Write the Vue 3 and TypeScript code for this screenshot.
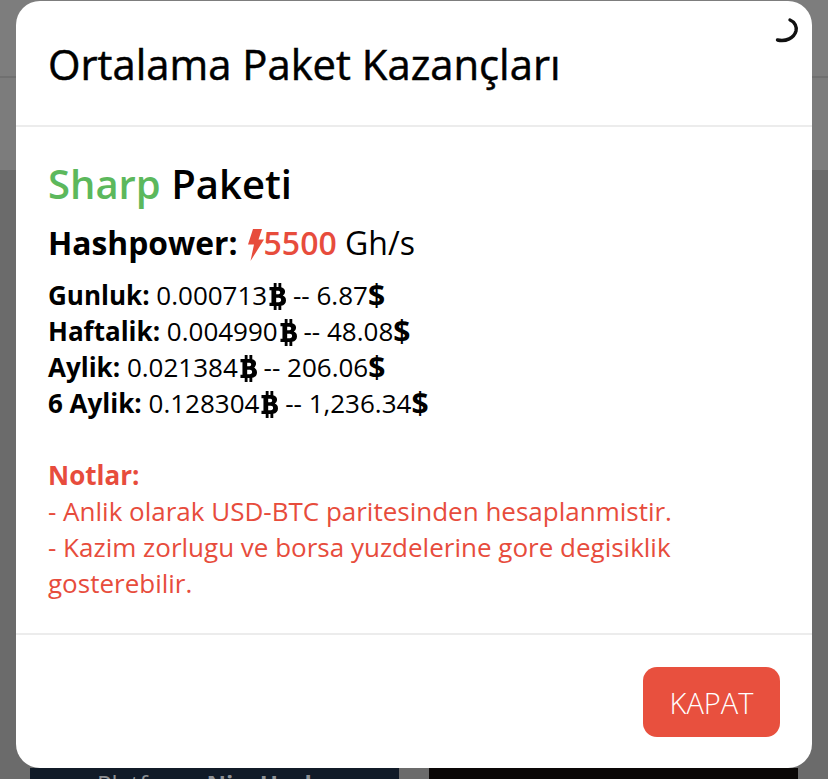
<script setup lang="ts">
const rows = [
  { label: "Gunluk:", btc: "0.000713", usd: "6.87" },
  { label: "Haftalik:", btc: "0.004990", usd: "48.08" },
  { label: "Aylik:", btc: "0.021384", usd: "206.06" },
  { label: "6 Aylik:", btc: "0.128304", usd: "1,236.34" }
];
</script>

<template>
  <div class="page">
    <div class="bg-nav"></div>
    <div class="bg-sub"></div>
    <div class="bg-content">
      <div class="bg-card card-blue"><span class="bg-text">Platform: <b>NiceHash</b></span></div>
      <div class="bg-card card-dark"></div>
    </div>

    <div class="modal">
      <header class="modal-header">
        <h1>Ortalama Paket Kazançları</h1>
        <svg class="spinner" width="28" height="30" viewBox="0 0 28 30">
          <path d="M18 4C23 6 25 11 24 15C22 22 14 26 5.5 24" fill="none" stroke="#111" stroke-width="3.4" stroke-linecap="round" />
        </svg>
      </header>

      <section class="modal-body">
        <h2><span class="green">Sharp</span> Paketi</h2>
        <h3>
          <b>Hashpower:</b>
          <span class="red power"><svg class="bolt" width="17" height="32" viewBox="0 0 17 32">
              <path d="M6 0H15L11.5 10.5H17L3.5 32L7 15.5H1Z" fill="currentColor" />
            </svg>5500</span>
          Gh/s
        </h3>

        <ul class="rates">
          <li v-for="row in rows" :key="row.label">
            <b>{{ row.label }}</b> {{ row.btc }}<svg class="btc" width="17" height="27" viewBox="0 0 18 27" preserveAspectRatio="none">
              <path fill-rule="evenodd" d="M0.5 4H5V0H8V4H10V0H13V4.2C15.8 4.8 17 6.6 17 8.6C17 10.5 16 11.9 14.6 12.6C16.6 13.2 18 15 18 17.4C18 20.2 16 22.3 13 22.8V27H10V23H8V27H5V23H0.5V19.8H2.6V7.2H0.5ZM7.6 7.8V11.2H10C11.1 11.2 11.8 10.5 11.8 9.5C11.8 8.5 11.1 7.8 10 7.8ZM7.6 14.8V19.2H10.4C11.9 19.2 12.8 18.3 12.8 17C12.8 15.7 11.9 14.8 10.4 14.8Z" fill="currentColor" />
            </svg> -- {{ row.usd }}<b class="usd">$</b>
          </li>
        </ul>

        <div class="notes">
          <b>Notlar:</b>
          <p>- Anlik olarak USD-BTC paritesinden hesaplanmistir.</p>
          <p>- Kazim zorlugu ve borsa yuzdelerine gore degisiklik gosterebilir.</p>
        </div>
      </section>

      <footer class="modal-footer">
        <button type="button" class="close-btn">KAPAT</button>
      </footer>
    </div>
  </div>
</template>

<style>
html,
body {
  margin: 0;
  background: #6b6b6b;
}
</style>

<style scoped>
.page {
  position: relative;
  width: 828px;
  height: 779px;
  overflow: hidden;
  background: #6b6b6b;
  font-family: "Open Sans", "Noto Sans", sans-serif;
}

.bg-nav {
  height: 78px;
  box-sizing: border-box;
  background: #7d7d7d;
  border-bottom: 2px solid #707070;
}

.bg-sub {
  height: 92px;
  background: #7c7c7c;
}

.bg-content {
  display: flex;
  gap: 30px;
  padding: 598px 30px 0;
}

.bg-card {
  width: 369px;
  height: 60px;
  flex: none;
  box-sizing: border-box;
  padding: 0 0 0 67px;
}

.card-blue {
  background: #111b28;
}

.card-dark {
  background: #0a0706;
}

.bg-text {
  font-size: 24px;
  line-height: 32px;
  color: #8d9094;
}

.modal {
  position: absolute;
  top: 1px;
  left: 16px;
  width: 796px;
  height: 767px;
  display: flex;
  flex-direction: column;
  background: #fff;
  border-radius: 24px;
  color: #000;
}

.modal-header {
  position: relative;
  height: 126px;
  flex: none;
  box-sizing: border-box;
  padding: 35px 32px 0;
  border-bottom: 2px solid #ececec;
}

h1 {
  margin: 0;
  font-size: 41.8px;
  font-weight: 400;
  line-height: 56px;
  -webkit-text-stroke: 0.5px #000;
}

.spinner {
  position: absolute;
  top: 15px;
  right: 12px;
}

.modal-body {
  flex: 1;
  padding: 33px 32px 0;
  border-bottom: 2px solid #ececec;
}

h2 {
  margin: 0;
  font-size: 40px;
  font-weight: 600;
  line-height: 48px;
}

.green {
  color: #5cb85c;
}

h3 {
  margin: 16px 0 0;
  font-size: 32px;
  font-weight: 400;
  line-height: 38px;
}

h3 b {
  font-size: 31.8px;
  font-weight: 700;
}

.power {
  margin-left: 9px;
  font-weight: 600;
}

.red {
  color: #e74c3c;
}

.bolt {
  vertical-align: -6px;
}

.rates {
  margin: 15px 0 0;
  padding: 0;
  list-style: none;
  font-size: 26px;
  line-height: 36px;
}

.rates b {
  font-size: 26px;
  font-weight: 700;
}

.rates .usd {
  font-size: 30px;
  line-height: 0;
  vertical-align: -1px;
}

.btc {
  margin-left: 2px;
  vertical-align: -5px;
}

.notes {
  margin-top: 36px;
  color: #e74c3c;
  font-size: 26px;
  line-height: 36px;
}

.notes b {
  font-size: 26px;
  font-weight: 700;
}

.notes p {
  margin: 0;
}

.modal-footer {
  height: 133px;
  flex: none;
  box-sizing: border-box;
  display: flex;
  justify-content: flex-end;
  padding: 32px 32px 0;
}

.close-btn {
  width: 137px;
  height: 70px;
  border: 0;
  border-radius: 14px;
  background: #e8503e;
  color: #fff;
  font-family: inherit;
  font-size: 29px;
  font-weight: 300;
}
</style>
